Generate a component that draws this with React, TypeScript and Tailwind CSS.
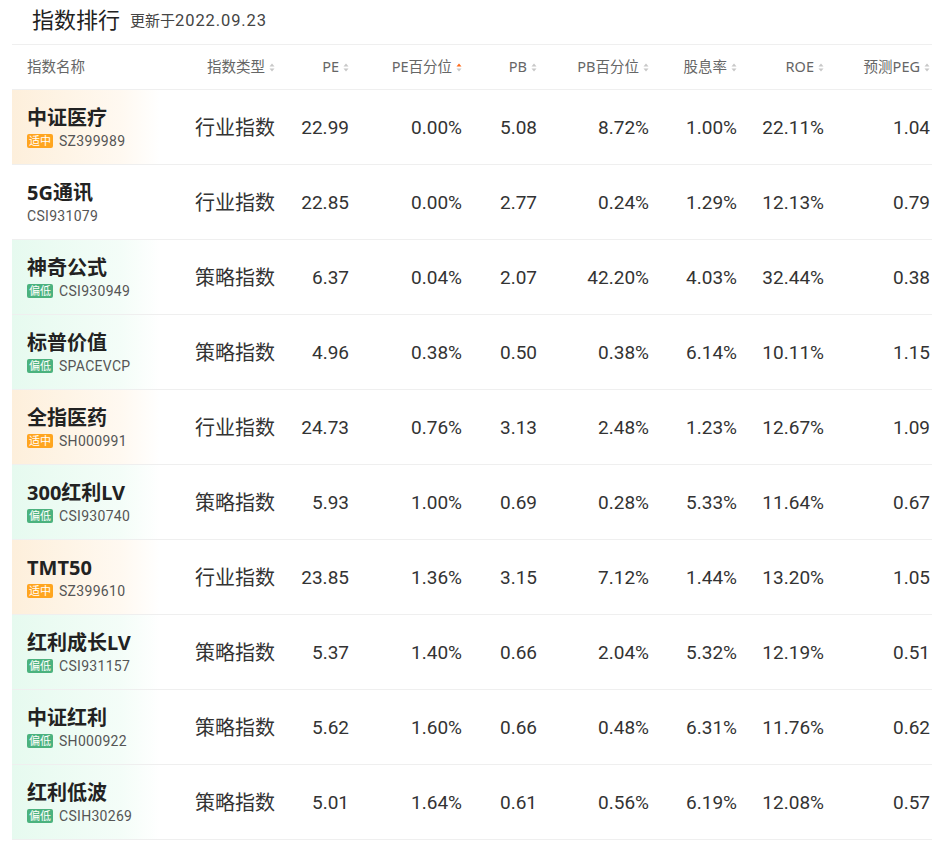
import React from "react";

type Row = {
  name: string;
  code: string;
  tag?: "mid" | "low";
  type: string;
  v: string[];
};

const rows: Row[] = [
  { name: "中证医疗", code: "SZ399989", tag: "mid", type: "行业指数", v: ["22.99", "0.00%", "5.08", "8.72%", "1.00%", "22.11%", "1.04"] },
  { name: "5G通讯", code: "CSI931079", type: "行业指数", v: ["22.85", "0.00%", "2.77", "0.24%", "1.29%", "12.13%", "0.79"] },
  { name: "神奇公式", code: "CSI930949", tag: "low", type: "策略指数", v: ["6.37", "0.04%", "2.07", "42.20%", "4.03%", "32.44%", "0.38"] },
  { name: "标普价值", code: "SPACEVCP", tag: "low", type: "策略指数", v: ["4.96", "0.38%", "0.50", "0.38%", "6.14%", "10.11%", "1.15"] },
  { name: "全指医药", code: "SH000991", tag: "mid", type: "行业指数", v: ["24.73", "0.76%", "3.13", "2.48%", "1.23%", "12.67%", "1.09"] },
  { name: "300红利LV", code: "CSI930740", tag: "low", type: "策略指数", v: ["5.93", "1.00%", "0.69", "0.28%", "5.33%", "11.64%", "0.67"] },
  { name: "TMT50", code: "SZ399610", tag: "mid", type: "行业指数", v: ["23.85", "1.36%", "3.15", "7.12%", "1.44%", "13.20%", "1.05"] },
  { name: "红利成长LV", code: "CSI931157", tag: "low", type: "策略指数", v: ["5.37", "1.40%", "0.66", "2.04%", "5.32%", "12.19%", "0.51"] },
  { name: "中证红利", code: "SH000922", tag: "low", type: "策略指数", v: ["5.62", "1.60%", "0.66", "0.48%", "6.31%", "11.76%", "0.62"] },
  { name: "红利低波", code: "CSIH30269", tag: "low", type: "策略指数", v: ["5.01", "1.64%", "0.61", "0.56%", "6.19%", "12.08%", "0.57"] },
];

const valueWidths = ["w-[74px]", "w-[113px]", "w-[75px]", "w-[112px]", "w-[88px]", "w-[87px]", "w-[106px]"];
const headers = ["PE", "PE百分位", "PB", "PB百分位", "股息率", "ROE", "预测PEG"];

const FONT = { fontFamily: '"Noto Sans", "Noto Sans CJK SC", sans-serif' };
const NUM = { fontFamily: 'Roboto, "Noto Sans CJK SC", sans-serif' };

function SortIcon({ active }: { active?: boolean }) {
  return (
    <svg width="6" height="9" viewBox="0 0 6 9" className="ml-[4px] shrink-0">
      <path d="M3 0.5 L5.5 3.5 L0.5 3.5 Z" fill={active ? "#ff6a1a" : "#c8c8c8"} />
      <path d="M3 8.5 L5.5 5.5 L0.5 5.5 Z" fill="#c8c8c8" />
    </svg>
  );
}

export default function App() {
  return (
    <div className="w-[948px] h-[849px] bg-white overflow-hidden" style={FONT}>
      <div className="flex items-end h-[44px] pl-[32px] pb-[11px]">
        <span className="text-[22px] leading-[28px] text-[#222]">指数排行</span>
        <span className="ml-[10px] text-[15px] leading-[24px] text-[#444]">
          更新于
          <span className="text-[16.5px] tracking-[0.9px]" style={NUM}>
            2022.09.23
          </span>
        </span>
      </div>
      <div className="ml-[12px] w-[920px]">
        <div className="flex items-center h-[46px] border-t border-b border-[#efefef] text-[14.5px] text-[#666]">
          <div className="w-[168px] pl-[15px]">指数名称</div>
          <div className="w-[95px] flex items-center justify-end">
            指数类型
            <SortIcon />
          </div>
          {headers.map((h, i) => (
            <div key={h} className={`${valueWidths[i]} flex items-center justify-end`}>
              {h}
              <SortIcon active={i === 1} />
            </div>
          ))}
        </div>
        {rows.map((r) => (
          <div key={r.code} className="flex items-center h-[75px] border-b border-[#efefef]">
            <div
              className={`w-[168px] h-full flex flex-col justify-center pl-[15px] ${
                r.tag === "mid"
                  ? "bg-[linear-gradient(to_right,#fdefdb_0px,#fff9f1_110px,#ffffff_148px,#ffffff_100%)]"
                  : r.tag === "low"
                  ? "bg-[linear-gradient(to_right,#e6faef_0px,#f4fdf8_110px,#ffffff_148px,#ffffff_100%)]"
                  : ""
              }`}
            >
              <div className="text-[20px] leading-[26px] font-bold text-[#222]">{r.name}</div>
              <div className="flex items-center mt-[1px]">
                {r.tag && (
                  <span
                    className={`mr-[6px] h-[14px] px-[2px] text-[11px] leading-[14px] text-white rounded-[2px] ${
                      r.tag === "mid" ? "bg-[#ffa51f]" : "bg-[#4bb27e]"
                    }`}
                  >
                    {r.tag === "mid" ? "适中" : "偏低"}
                  </span>
                )}
                <span className="text-[14px] leading-[18px] text-[#555] tracking-[0.3px]" style={NUM}>
                  {r.code}
                </span>
              </div>
            </div>
            <div className="w-[95px] text-right text-[20px] text-[#333] pt-[2px]">{r.type}</div>
            {r.v.map((val, i) => (
              <div key={i} className={`${valueWidths[i]} text-right text-[19px] text-[#333] pt-[3px]`} style={NUM}>
                {val}
              </div>
            ))}
          </div>
        ))}
      </div>
    </div>
  );
}
